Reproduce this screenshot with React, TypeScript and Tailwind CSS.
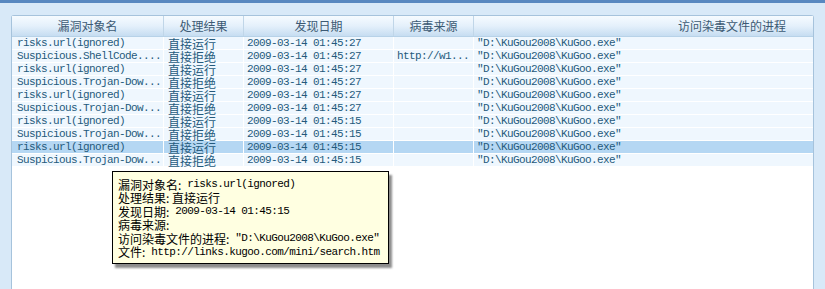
import type { ReactNode } from 'react'

type Row = {
  name: string
  result: string
  date: string
  source: string
  process: string
}

const rows: Row[] = [
  { name: 'risks.url(ignored)', result: '直接运行', date: '2009-03-14 01:45:27', source: '', process: '"D:\\KuGou2008\\KuGoo.exe"' },
  { name: 'Suspicious.ShellCode....', result: '直接拒绝', date: '2009-03-14 01:45:27', source: 'http://w1...', process: '"D:\\KuGou2008\\KuGoo.exe"' },
  { name: 'risks.url(ignored)', result: '直接运行', date: '2009-03-14 01:45:27', source: '', process: '"D:\\KuGou2008\\KuGoo.exe"' },
  { name: 'Suspicious.Trojan-Dow...', result: '直接拒绝', date: '2009-03-14 01:45:27', source: '', process: '"D:\\KuGou2008\\KuGoo.exe"' },
  { name: 'risks.url(ignored)', result: '直接运行', date: '2009-03-14 01:45:27', source: '', process: '"D:\\KuGou2008\\KuGoo.exe"' },
  { name: 'Suspicious.Trojan-Dow...', result: '直接拒绝', date: '2009-03-14 01:45:27', source: '', process: '"D:\\KuGou2008\\KuGoo.exe"' },
  { name: 'risks.url(ignored)', result: '直接运行', date: '2009-03-14 01:45:15', source: '', process: '"D:\\KuGou2008\\KuGoo.exe"' },
  { name: 'Suspicious.Trojan-Dow...', result: '直接拒绝', date: '2009-03-14 01:45:15', source: '', process: '"D:\\KuGou2008\\KuGoo.exe"' },
  { name: 'risks.url(ignored)', result: '直接运行', date: '2009-03-14 01:45:15', source: '', process: '"D:\\KuGou2008\\KuGoo.exe"' },
  { name: 'Suspicious.Trojan-Dow...', result: '直接拒绝', date: '2009-03-14 01:45:15', source: '', process: '"D:\\KuGou2008\\KuGoo.exe"' },
]

const SELECTED = 8

function Mono({ children }: { children: ReactNode }) {
  return (
    <span className="font-['Liberation_Mono',monospace] text-[11px] leading-none tracking-[-0.6px]">{children}</span>
  )
}

function Cjk({ children }: { children: ReactNode }) {
  return <span className="font-['Noto_Sans_CJK_SC',sans-serif] text-[12px] leading-none">{children}</span>
}

const cols = ['w-[152px]', 'w-[80px]', 'w-[150px]', 'w-[80px]', 'flex-1']
const cell = 'flex h-full items-center whitespace-nowrap'

export default function App() {
  return (
    <div className="relative flex h-[289px] w-[825px] flex-col overflow-hidden border-t-[3px] border-[#5888c0] bg-[#d8e9f8] px-[11px] pt-[12px]">
      <div className="flex flex-1 flex-col rounded-t-[3px] border border-b-0 border-[#a6c3dc] bg-white">
        <div className="flex h-[21px] border-b border-[#b7d2e8] bg-gradient-to-b from-[#f6fbff] via-[#e4f0fb] to-[#c6ddf1] text-[#3c5a74]">
          <div className={`${cols[0]} flex items-center justify-center border-r border-[#c0d6e8]`}><Cjk>漏洞对象名</Cjk></div>
          <div className={`${cols[1]} flex items-center justify-center border-r border-[#c0d6e8]`}><Cjk>处理结果</Cjk></div>
          <div className={`${cols[2]} flex items-center justify-center border-r border-[#c0d6e8]`}><Cjk>发现日期</Cjk></div>
          <div className={`${cols[3]} flex items-center justify-center border-r border-[#c0d6e8]`}><Cjk>病毒来源</Cjk></div>
          <div className={`${cols[4]} flex items-center pl-[204px]`}><Cjk>访问染毒文件的进程</Cjk></div>
        </div>
        <div className="flex flex-col text-[#245a7c]">
          {rows.map((row, i) => (
            <div
              key={i}
              className={`flex h-[13px] shadow-[inset_0_-1px_0_#ffffff] ${i === SELECTED ? 'bg-[#b5d7f3]' : 'bg-[#eff7fe]'}`}
            >
              <div className={`${cols[0]} ${cell} overflow-hidden border-r border-white pl-[5px]`}><Mono>{row.name}</Mono></div>
              <div className={`${cols[1]} ${cell} border-r border-white pl-[4px]`}><Cjk>{row.result}</Cjk></div>
              <div className={`${cols[2]} ${cell} border-r border-white pl-[3px]`}><Mono>{row.date}</Mono></div>
              <div className={`${cols[3]} ${cell} border-r border-white pl-[3px]`}><Mono>{row.source}</Mono></div>
              <div className={`${cols[4]} ${cell} pl-[3px]`}><Mono>{row.process}</Mono></div>
            </div>
          ))}
        </div>
      </div>

      <div className="absolute left-[112px] top-[168px] flex w-[277px] flex-col border border-black bg-[#ffffe1] px-[5px] pb-[4px] pt-[6px] text-black shadow-[3px_4px_2px_rgba(0,0,0,0.45)]">
        <div className="flex h-[13.5px] items-center whitespace-nowrap"><Cjk>漏洞对象名: </Cjk><Mono>&nbsp;risks.url(ignored)</Mono></div>
        <div className="flex h-[13.5px] items-center whitespace-nowrap"><Cjk>处理结果: 直接运行</Cjk></div>
        <div className="flex h-[13.5px] items-center whitespace-nowrap"><Cjk>发现日期: </Cjk><Mono>&nbsp;2009-03-14 01:45:15</Mono></div>
        <div className="flex h-[13.5px] items-center whitespace-nowrap"><Cjk>病毒来源:</Cjk></div>
        <div className="flex h-[13.5px] items-center whitespace-nowrap"><Cjk>访问染毒文件的进程: </Cjk><Mono>&nbsp;"D:\KuGou2008\KuGoo.exe"</Mono></div>
        <div className="flex h-[13.5px] items-center whitespace-nowrap"><Cjk>文件: </Cjk><Mono>&nbsp;http://links.kugoo.com/mini/search.htm</Mono></div>
      </div>
    </div>
  )
}
